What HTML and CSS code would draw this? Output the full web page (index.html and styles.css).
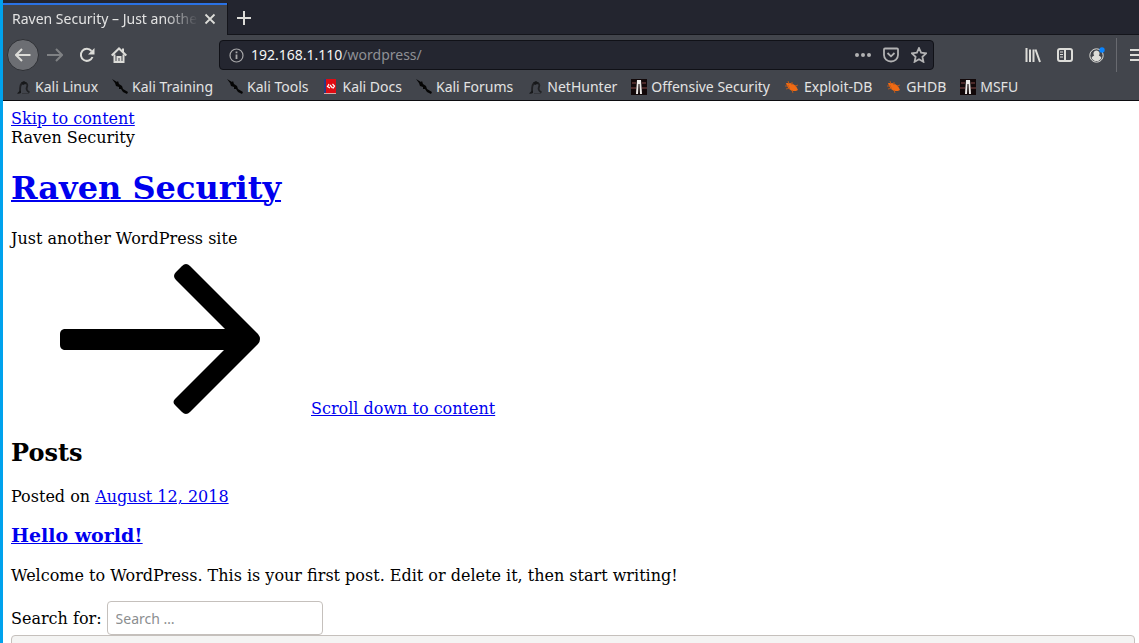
FILE: index.html
```html
<!DOCTYPE html>
<html lang="en">
<head>
<meta charset="utf-8">
<title>Raven Security – Just another WordPress site</title>
<link rel="stylesheet" href="styles.css">
</head>
<body>
<svg class="defs" aria-hidden="true">
  <symbol id="dragon" viewBox="0 0 16 16"><path d="M5 13C5 8 5 4 9 4c3 0 4 1.500 3 4-1 2 0 4 2.500 5.500" fill="none" stroke="#202124" stroke-width="1.800"/><path d="M6 3.500L9 2l3 2-4 2zM2 14.500q2-2.500 4-3v2.500q-2 1-4 .5z" fill="#17181a"/><path d="M7 14.500h7" stroke="#34363b" stroke-width="1"/></symbol>
  <symbol id="knife" viewBox="0 0 16 16"><path d="M0 0l5 3 1-1 1 3 3 2 1 3 5 3-1 2-4-2-2-3-2 0 0-2-3-1-1-3z" fill="#050505"/></symbol>
  <symbol id="docs" viewBox="0 0 16 16"><path d="M2 0h2v14H2z" fill="#273a83"/><path d="M4 0h10v14H4z" fill="#e00b13"/><path d="M2 14h12v1H2z" fill="#d5aaa8"/><path d="M7 5L5.500 7.500 8 9M10.500 5l2 2-1.500 2.500M8 6l2.500 3" fill="none" stroke="#fff" stroke-width="1.200"/></symbol>
  <symbol id="offsec" viewBox="0 0 16 16"><path d="M0 0h16v16H0z" fill="#120809"/><path d="M1 3h4v2H1zM11 3h4v2h-4zM0 8h5v2H0zM11 8h5v2h-5z" fill="#4c2929"/><path d="M6 1h4l1 14H9L8.500 5h-1L7 15H5z" fill="#eeeae8"/></symbol>
  <symbol id="bug" viewBox="0 0 16 16"><path d="M2 4l4 0 3 1 3 2 2 4-2 1-4 0-3-2-2-3z" fill="#f06a13"/><path d="M5 5L4 2M8 6V3M1 7h4M2 10l4-1M11 7l3-1M8 11l1 3" fill="none" stroke="#b3571d" stroke-width="1"/></symbol>
</svg>
<div class="window">
  <header class="chrome">
    <div class="tabs">
      <div class="tab">
        <span class="tab-title">Raven Security – Just another WordPress site</span>
        <button class="tab-close" aria-label="Close tab"><svg width="12" height="12" viewBox="0 0 12 12"><path d="M1.500 1.500l9 9M10.500 1.500l-9 9"/></svg></button>
      </div>
      <button class="tab-new" aria-label="New tab"><svg width="14" height="14" viewBox="0 0 14 14"><path d="M7 0v14M0 7h14"/></svg></button>
    </div>
    <div class="nav">
      <button class="tool back" aria-label="Back"><svg width="16" height="16" viewBox="0 0 16 16"><path d="M15.500 8H1.500M7 2L1 8l6 6"/></svg></button>
      <button class="tool dim" aria-label="Forward"><svg width="16" height="16" viewBox="0 0 16 16"><path d="M0 8h14.500M9 2l6 6-6 6"/></svg></button>
      <button class="tool" aria-label="Reload"><svg width="16" height="16" viewBox="0 0 16 16"><path d="M12.500 4A6 6 0 1 0 13.500 10"/><path d="M15.500 1v6.500H9z" class="solid"/></svg></button>
      <button class="tool" aria-label="Home"><svg width="16" height="16" viewBox="0 0 16 16"><path d="M.7 8.500L8 1.500l7.300 7M3.500 7.500V15h9V7.500"/><path d="M6.500 15v-5h3v5M12 1.500v4"/></svg></button>
      <div class="url">
        <svg class="info" width="15" height="15" viewBox="0 0 15 15"><circle cx="7.500" cy="7.500" r="6.500"/><path d="M7.500 6.500V11M7.500 3.500v1.700" stroke-width="1.800"/></svg>
        <span class="address">192.168.1.110<span class="path">/wordpress/</span></span>
        <button class="mini" aria-label="Page actions"><svg width="16" height="16" viewBox="0 0 16 16"><g class="dots"><circle cx="2" cy="8" r="2"/><circle cx="8" cy="8" r="2"/><circle cx="14" cy="8" r="2"/></g></svg></button>
        <button class="mini" aria-label="Save to Pocket"><svg width="16" height="16" viewBox="0 0 16 16"><path d="M2 1.500h12q1 0 1 1V8a7 6.500 0 0 1-14 0V2.500q0-1 1-1zM4.500 6L8 9.300 11.500 6"/></svg></button>
        <button class="mini" aria-label="Bookmark this page"><svg width="16" height="16" viewBox="0 0 16 16"><path d="M8 1l2.100 4.700 5 .6-3.700 3.500 1 5L8 12.300l-4.400 2.500 1-5L.9 6.300l5-.6z"/></svg></button>
      </div>
      <div class="tools">
        <button class="tool" aria-label="Library"><svg width="16" height="16" viewBox="0 0 16 16"><path d="M1.500 1v14M5 2.500V15M8.500 2.500V15M10.500 2.500L15 15"/></svg></button>
        <button class="tool" aria-label="Sidebars"><svg width="16" height="16" viewBox="0 0 16 16"><rect x="1" y="2" width="14" height="12" rx="2"/><path d="M8 2v12"/><path d="M3 5h3M3 7.500h3M3 10h3" class="thin"/></svg></button>
        <button class="tool" aria-label="Account"><svg width="16" height="16" viewBox="0 0 16 16"><circle cx="7.500" cy="8.500" r="6.700" class="thin"/><path d="M7.500 3.500a3 3 0 0 1 2.300 5q2 .8 2.700 2.500A5.600 5.600 0 0 1 2.500 11q.7-1.700 2.700-2.500A3 3 0 0 1 7.500 3.500z" class="solid"/><circle cx="13" cy="3" r="2.700" class="alert"/></svg></button>
      </div>
      <button class="menu" aria-label="Open menu"><svg width="16" height="16" viewBox="0 0 16 16"><path d="M1 3h14M1 8h14M1 13h14"/></svg></button>
    </div>
    <nav class="bookmarks" aria-label="Bookmarks">
      <a href="#"><svg><use href="#dragon"/></svg>Kali Linux</a>
      <a href="#"><svg><use href="#knife"/></svg>Kali Training</a>
      <a href="#"><svg><use href="#knife"/></svg>Kali Tools</a>
      <a href="#"><svg><use href="#docs"/></svg>Kali Docs</a>
      <a href="#"><svg><use href="#knife"/></svg>Kali Forums</a>
      <a href="#"><svg><use href="#dragon"/></svg>NetHunter</a>
      <a href="#"><svg><use href="#offsec"/></svg>Offensive Security</a>
      <a href="#"><svg><use href="#bug"/></svg>Exploit-DB</a>
      <a href="#"><svg><use href="#bug"/></svg>GHDB</a>
      <a href="#"><svg><use href="#offsec"/></svg>MSFU</a>
    </nav>
  </header>
  <main class="page">
    <a href="#content">Skip to content</a>
    <div>Raven Security</div>
    <h1><a href="#">Raven Security</a></h1>
    <p class="tagline">Just another WordPress site</p>
    <a class="scroll" href="#content"><svg width="300" height="150" viewBox="0 0 300 150"><path d="M53 65H214L165 16Q161 12 165 8L171 2Q175-2 179 2L247 70Q251 75 247 80L179 148Q175 152 171 148L164 141Q161 138 164 135L213 86H53Q49 85 49 81V70Q49 66 53 65Z"/></svg>Scroll down to content</a>
    <h2 id="content">Posts</h2>
    <div>Posted on <a href="#">August 12, 2018</a></div>
    <h3><a href="#">Hello world!</a></h3>
    <p class="post">Welcome to WordPress. This is your first post. Edit or delete it, then start writing!</p>
    <form>
      <div class="search"><label for="search">Search for:</label><input id="search" type="search" placeholder="Search …"></div>
      <button class="submit" type="button" aria-label="Search"></button>
    </form>
  </main>
</div>
</body>
</html>
```
FILE: styles.css
```css
* { box-sizing: border-box; }
body { margin: 0; background: #fff; }
.defs { position: absolute; width: 0; height: 0; }
button { margin: 0; padding: 0; border: 0; background: none; }
.window {
  height: 100vh;
  overflow: hidden;
  border-left: 3px solid #00a2ed;
}
.chrome {
  background: #42454c;
  border-bottom: 1px solid #0c0c10;
  color: #e3e3e3;
  font: 14px/20px "Noto Sans", sans-serif;
}
.chrome svg { display: block; flex: none; fill: none; stroke: #dcdcd8; stroke-width: 2; }
.chrome button { display: flex; align-items: center; justify-content: center; flex: none; }
.chrome .solid { fill: #dcdcd8; stroke: none; }
.chrome .thin { stroke-width: 1; }
.chrome .alert { fill: #0a84ff; stroke: none; }

.tabs { display: flex; height: 35px; padding-top: 3px; background: #23252f; }
.tab {
  display: flex;
  align-items: center;
  width: 224px;
  padding: 0 11px 2px 9px;
  border-top: 2px solid #2a72e5;
  background: #42454c;
}
.tab-title {
  flex: 1;
  overflow: hidden;
  white-space: nowrap;
  mask-image: linear-gradient(to right, #000 82%, transparent);
}
.tab-close { width: 12px; margin-left: 6px; }
.tab-close svg { stroke-width: 1.8; }
.tabs .tab-new {
  flex: 1;
  justify-content: flex-start;
  padding: 0 0 2px 9px;
  border-left: 1px solid #14151b;
  border-bottom: 1px solid #14151b;
}

.nav { display: flex; align-items: center; height: 40px; padding-left: 4px; }
.tool { width: 32px; height: 32px; }
.tool.back { border: 1px solid #2e3035; border-radius: 50%; background: #6c6e73; }
.tool.dim { opacity: 0.4; }
.url {
  display: flex;
  align-items: center;
  flex: 1;
  height: 30px;
  margin-left: 84px;
  padding: 0 6px 0 9px;
  border: 1px solid #101117;
  border-radius: 4px;
  background: #242630;
}
.url .info { stroke: #a7a7a9; stroke-width: 1.2; }
.address { flex: 1; margin-left: 7px; color: #f5f5f5; }
.path { color: #8f9095; }
.mini { width: 16px; margin-left: 12px; }
.mini svg { stroke: #b2b2b3; stroke-width: 1.8; }
.mini .dots { fill: #b2b2b3; stroke: none; }
.tools { display: flex; margin: 0 3px 0 83px; }
.chrome .menu {
  justify-content: flex-start;
  width: 23px;
  height: 34px;
  padding-left: 12px;
  border-left: 1px solid #686a70;
  overflow: hidden;
}

.bookmarks { display: flex; gap: 14px; height: 25px; padding: 0 0 2px 12px; }
.bookmarks a {
  display: flex;
  align-items: center;
  gap: 4px;
  color: inherit;
  text-decoration: none;
  white-space: nowrap;
}
.bookmarks svg { width: 16px; height: 16px; stroke: none; }

.page { padding: 8px 4px 0 8px; color: #000; font: 16px/19px "DejaVu Serif", serif; }
.page a { color: #0000ee; }
h1, h2, h3, p { margin: 0; }
h1 { margin: 22px 0; font-size: 32px; line-height: 38px; }
h1 a { text-decoration-thickness: 2px; }
.tagline { margin-bottom: 16px; }
.scroll svg { fill: #000; }
h2 { margin: 21px 0 20px; font-size: 24px; line-height: 28px; }
h3 { margin: 18px 0 20px; font-size: 19px; line-height: 22px; }
.post { margin-bottom: 16px; }
.search { display: flex; align-items: center; gap: 5px; }
.search input {
  width: 216px;
  height: 34px;
  padding: 0 8px;
  border: 1px solid #c5c0bc;
  border-radius: 4px;
  background: #fff;
  font: 14px/20px "Noto Sans", sans-serif;
}
.search input::placeholder { color: #8b8e8f; }
.submit {
  display: block;
  width: 100%;
  height: 34px;
  border: 1px solid #c5c0bc;
  border-radius: 4px;
  background: #f4f4f3;
}
```
